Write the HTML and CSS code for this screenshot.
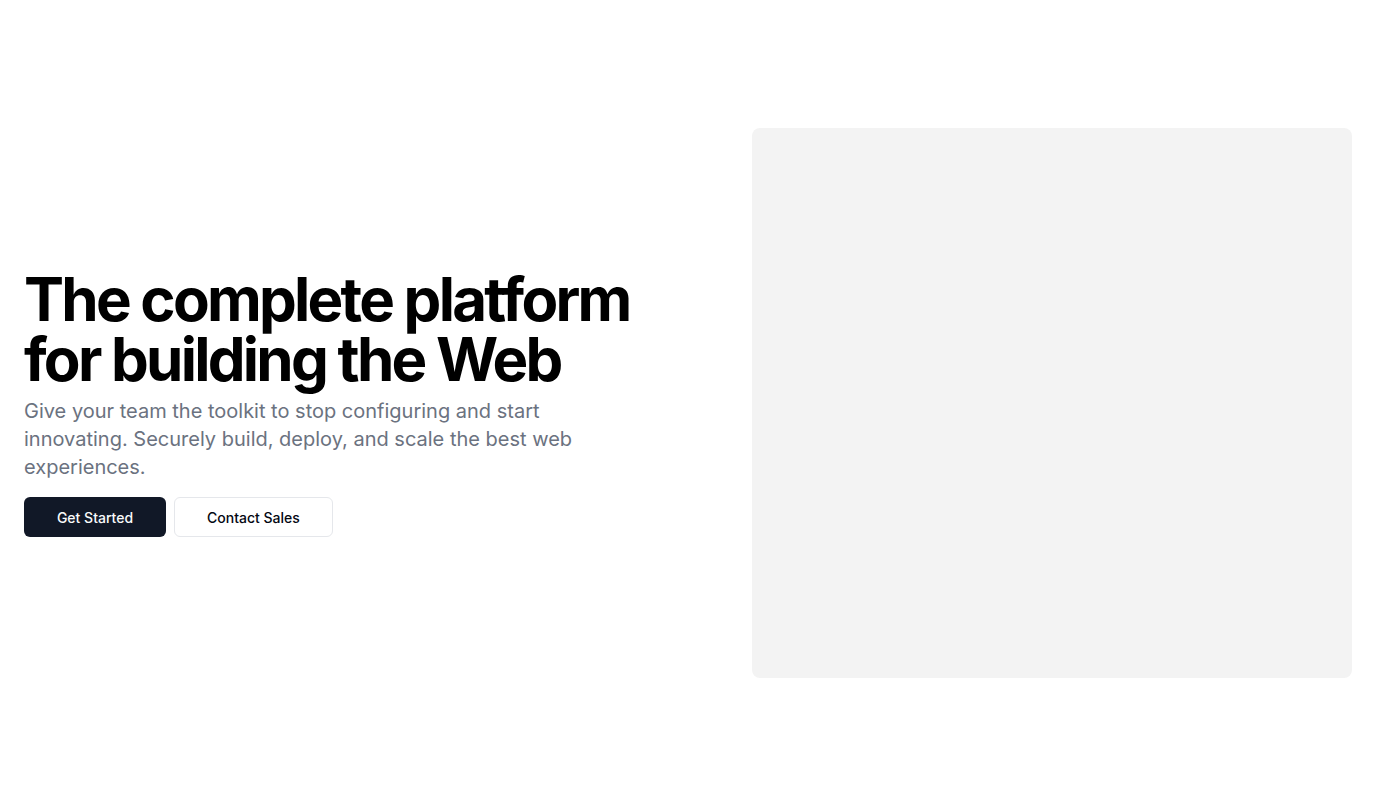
FILE: index.html
```html
<!DOCTYPE html>
<html lang="en">
<head>
<meta charset="utf-8">
<title>The complete platform</title>
<link rel="stylesheet" href="styles.css">
</head>
<body>
<main class="hero">
  <div class="grid">
    <div class="copy">
      <h1 class="title">The complete platform for building the Web</h1>
      <p class="lead">Give your team the toolkit to stop configuring and start innovating. Securely build, deploy, and scale the best web experiences.</p>
      <div class="actions">
        <a class="btn btn-primary" href="#">Get Started</a>
        <a class="btn btn-outline" href="#">Contact Sales</a>
      </div>
    </div>
    <div class="media">
      <div class="placeholder"></div>
    </div>
  </div>
</main>
</body>
</html>
```
FILE: styles.css
```css
* { box-sizing: border-box; }
html, body { margin: 0; padding: 0; }
body {
  font-family: Inter, "Noto Sans", sans-serif;
  background: #fff;
  color: #030712;
}
.hero {
  min-height: 806px;
  display: flex;
  align-items: center;
  padding: 0 24px;
}
.grid {
  width: 100%;
  display: grid;
  grid-template-columns: 1fr 1fr;
  gap: 48px;
  align-items: center;
}
.copy {
  display: flex;
  flex-direction: column;
}
.title {
  margin: 0;
  font-size: 60px;
  line-height: 60px;
  font-weight: 700;
  letter-spacing: -2.75px;
  color: #000;
}
.lead {
  margin: 8px 0 0;
  max-width: 600px;
  font-size: 20px;
  line-height: 28px;
  color: #6b7280;
}
.actions {
  display: flex;
  gap: 8px;
  margin-top: 16px;
}
.btn {
  display: inline-flex;
  align-items: center;
  justify-content: center;
  height: 40px;
  padding: 0 32px;
  border-radius: 6px;
  font-size: 14px;
  font-weight: 500;
  text-decoration: none;
}
.btn-primary {
  min-width: 142px;
  background: #111827;
  color: #f9fafb;
}
.btn-outline {
  background: #fff;
  color: #030712;
  border: 1px solid #e5e7eb;
}
.media {
  display: flex;
  justify-content: flex-end;
}
.placeholder {
  width: 600px;
  height: 550px;
  background: #f3f3f3;
  border-radius: 8px;
}
```
